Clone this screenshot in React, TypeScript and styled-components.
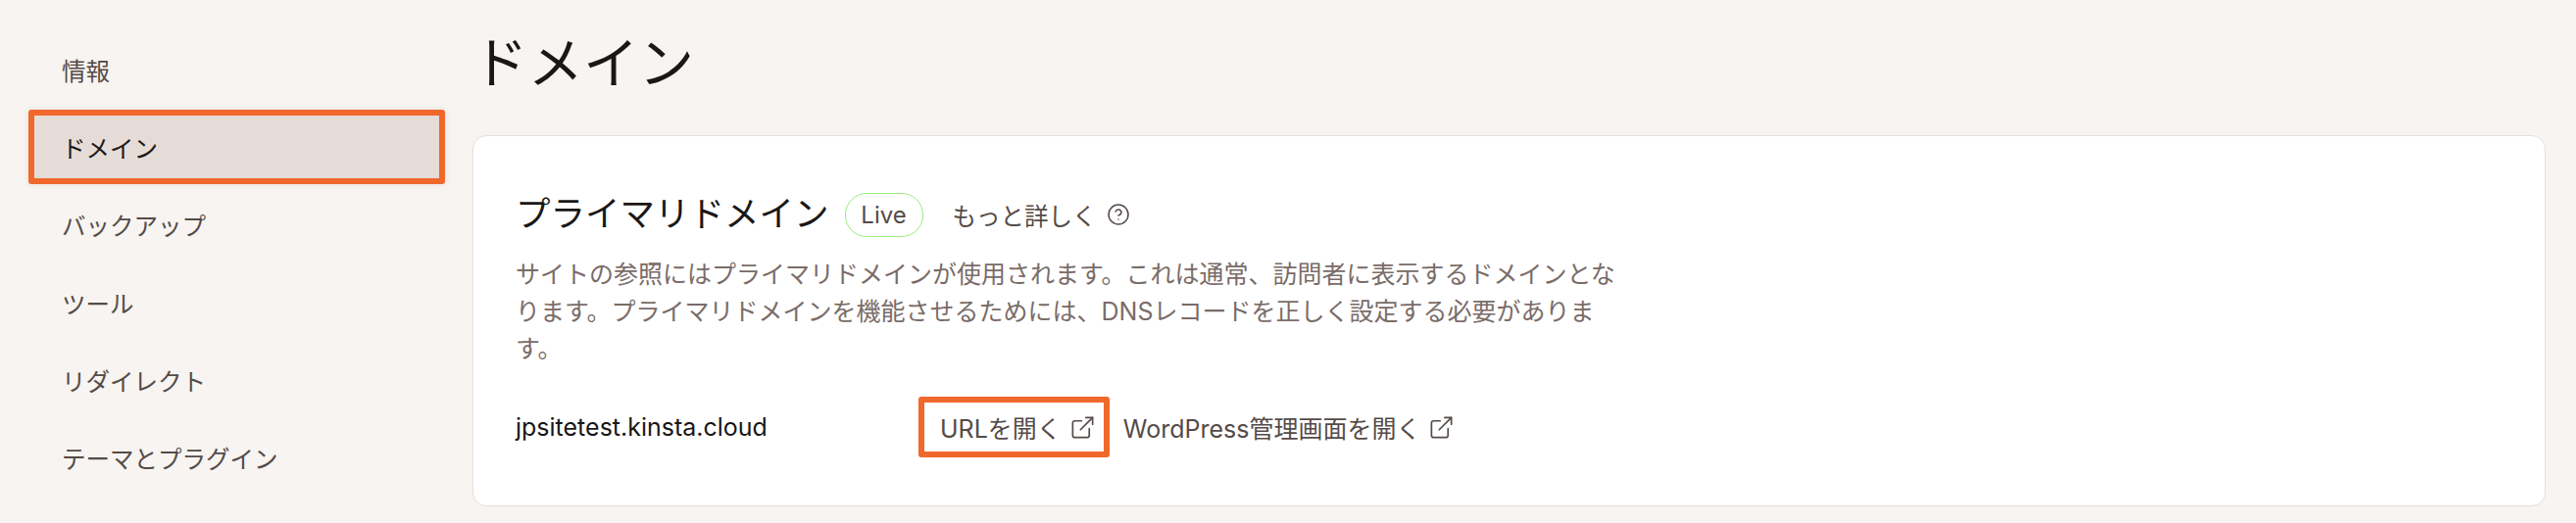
import { CircleHelp, ExternalLink } from 'lucide-react'
import styled, { createGlobalStyle, css } from 'styled-components'

const NAV_ITEMS = ['情報', 'ドメイン', 'バックアップ', 'ツール', 'リダイレクト', 'テーマとプラグイン']

const GlobalStyle = createGlobalStyle`
  html, body {
    margin: 0;
    background: #f7f4f1;
  }
  * {
    box-sizing: border-box;
  }
`
// orange marker frame drawn over the element
const marker = css`
  position: relative;
  &::after {
    content: '';
    position: absolute;
    inset: -6px;
    border: 6px solid #f0682b;
    border-radius: 3px;
  }
`
const Page = styled.div`
  display: flex;
  width: 2628px;
  height: 534px;
  overflow: hidden;
  font-family: Inter, 'Noto Sans CJK JP', sans-serif;
`
const Sidebar = styled.nav`
  display: flex;
  flex-direction: column;
  flex: 0 0 482px;
  gap: 15.4px;
  padding: 39px 34px 0 35px;
`
const NavItem = styled.div<{ active?: boolean }>`
  display: flex;
  align-items: center;
  flex: 0 0 64px;
  padding-left: 28px;
  font-size: 24.5px;
  color: ${({ active }) => (active ? '#1f1a19' : '#554b48')};
  background: ${({ active }) => (active ? '#e6dcd7' : 'transparent')};
  box-shadow: ${({ active }) => (active ? '0 0 6px 6px rgba(90, 70, 60, 0.12)' : 'none')};
  ${({ active }) => active && marker}
`
const Main = styled.main`
  display: flex;
  flex-direction: column;
  width: 2115px;
  padding-top: 24px;
`
const PageTitle = styled.h1`
  margin: 0 0 32px;
  height: 82px;
  line-height: 82px;
  font-size: 56.5px;
  font-weight: 400;
  color: #1a1716;
`
const Card = styled.section`
  display: flex;
  flex-direction: column;
  height: 379px;
  padding: 58px 43px 0;
  background: #fff;
  border: 1px solid #e8dedb;
  border-radius: 14px;
`
const TitleRow = styled.div`
  display: flex;
  align-items: center;
  height: 44px;
`
const CardTitle = styled.h2`
  margin: 0;
  font-size: 35.5px;
  font-weight: 400;
  line-height: 44px;
  color: #1a1716;
`
const LiveBadge = styled.span`
  display: flex;
  align-items: center;
  justify-content: center;
  width: 80px;
  height: 45px;
  margin-left: 16px;
  border: 1px solid #98ec80;
  border-radius: 22px;
  font-size: 24px;
  color: #554b48;
`
const LearnMore = styled.span`
  display: flex;
  align-items: center;
  gap: 10px;
  margin-left: 30px;
  font-size: 24.5px;
  color: #554b48;
`
const Description = styled.p`
  width: 1136px;
  margin: 20px 0 0;
  font-size: 25px;
  line-height: 38px;
  color: #7a6c68;
`
const LinkRow = styled.div`
  display: flex;
  align-items: center;
  margin-top: 36px;
`
const DomainName = styled.span`
  flex: 0 0 417px;
  font-size: 25px;
  color: #1a1716;
`
const LinkButton = styled.span<{ highlighted?: boolean }>`
  display: flex;
  align-items: center;
  gap: 8px;
  height: 50px;
  padding: 0 8px 0 16px;
  margin-right: 4px;
  font-size: 25px;
  color: #554b48;
  ${({ highlighted }) => highlighted && marker}
`

export default function App() {
  return (
    <Page>
      <GlobalStyle />
      <Sidebar>
        {NAV_ITEMS.map((item) => (
          <NavItem key={item} active={item === 'ドメイン'}>
            {item}
          </NavItem>
        ))}
      </Sidebar>
      <Main>
        <PageTitle>ドメイン</PageTitle>
        <Card>
          <TitleRow>
            <CardTitle>プライマリドメイン</CardTitle>
            <LiveBadge>Live</LiveBadge>
            <LearnMore>
              もっと詳しく
              <CircleHelp size={24} strokeWidth={1.5} />
            </LearnMore>
          </TitleRow>
          <Description>
            サイトの参照にはプライマリドメインが使用されます。これは通常、訪問者に表示するドメインとなります。プライマリドメインを機能させるためには、DNSレコードを正しく設定する必要があります。
          </Description>
          <LinkRow>
            <DomainName>jpsitetest.kinsta.cloud</DomainName>
            <LinkButton highlighted>
              URLを開く
              <ExternalLink size={27} strokeWidth={1.5} />
            </LinkButton>
            <LinkButton>
              WordPress管理画面を開く
              <ExternalLink size={27} strokeWidth={1.5} />
            </LinkButton>
          </LinkRow>
        </Card>
      </Main>
    </Page>
  )
}
